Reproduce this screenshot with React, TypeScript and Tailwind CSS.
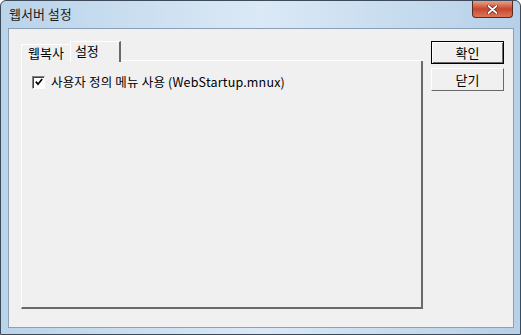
import type { ReactNode } from 'react';

const font = { fontFamily: '"Noto Sans CJK KR", "Liberation Sans", sans-serif' };

export default function App() {
  return (
    <div
      className="relative h-[335px] w-[521px] overflow-hidden rounded-t-[6px] border border-[#3c4a5a] bg-gradient-to-r from-[#b9d3ea] via-[#dbe9f6] to-[#b6d0e8] text-[12px] text-black"
      style={font}
    >
      <TitleBar />
      <div className="absolute left-[7px] top-[27px] h-[300px] w-[506px] border border-[#8aa0b6] bg-[#f0f0f0]">
        <div className="flex pl-[12px] pt-[12px]">
          <div className="flex w-[402px] flex-col">
            <Tabs />
            <div className="h-[248px] border-b-2 border-l border-r-2 border-b-[#696969] border-l-white border-r-[#696969] border-t-0">
              <label className="flex items-center gap-[6px] pl-[10px] pt-[14px] leading-[14px]">
                <Checkbox />
                <span className="text-[12.5px] tracking-[0.18px]">사용자 정의 메뉴 사용 (WebStartup.mnux)</span>
              </label>
            </div>
          </div>
          <div className="ml-[8px] flex flex-col gap-[4px] pt-0">
            <Button primary>확인</Button>
            <Button>닫기</Button>
          </div>
        </div>
      </div>
    </div>
  );
}

function TitleBar() {
  return (
    <div className="flex h-[27px] items-start justify-between">
      <span className="pl-[8px] pt-[5px] text-[13px] leading-[16px] text-[#1b1b1b]">웹서버 설정</span>
      <button
        type="button"
        className="mr-[7px] flex h-[17px] w-[41px] items-center justify-center rounded-b-[4px] border border-t-0 border-[#5a2a20] bg-gradient-to-b from-[#e6a08a] via-[#c8452c] to-[#d9775c]"
      >
        <svg width="11" height="9" viewBox="0 0 11 9">
          <path d="M1.5 1 L9.5 8 M9.5 1 L1.5 8" stroke="#4a2418" strokeWidth="3.2" strokeLinecap="round" />
          <path d="M1.5 1 L9.5 8 M9.5 1 L1.5 8" stroke="#ffffff" strokeWidth="1.8" strokeLinecap="round" />
        </svg>
      </button>
    </div>
  );
}

function Tabs() {
  return (
    <div className="flex h-[20px] items-end">
      <div className="flex h-[17px] items-center border-l border-t border-white px-[6px] text-[13px] leading-[14px]">
        웹복사
      </div>
      <div className="-mb-px flex h-[21px] w-[51px] items-start border-l border-r-2 border-t border-l-white border-r-[#696969] border-t-white bg-[#f0f0f0] pl-[4px] pt-[1px] text-[13px] leading-[15px]">
        설정
      </div>
      <div className="h-px flex-1 bg-white" />
    </div>
  );
}

function Checkbox() {
  return (
    <span className="flex h-[13px] w-[13px] items-center justify-center border border-t-[#808080] border-l-[#808080] border-b-white border-r-white bg-white shadow-[inset_1px_1px_0_#404040]">
      <svg width="8" height="8" viewBox="0 0 8 8">
        <path d="M0.8 3.6 L3 6.2 L7.2 1" stroke="#000" strokeWidth="1.7" fill="none" />
      </svg>
    </span>
  );
}

function Button({ children, primary = false }: { children: ReactNode; primary?: boolean }) {
  return (
    <button
      type="button"
      className={`flex h-[23px] w-[73px] items-center justify-center bg-[#f0f0f0] text-[13px] leading-none ${
        primary
          ? 'border border-black shadow-[inset_1px_1px_0_#fff,inset_-1px_-1px_0_#696969]'
          : 'border border-b-[#696969] border-l-white border-r-[#696969] border-t-white'
      }`}
    >
      {children}
    </button>
  );
}
